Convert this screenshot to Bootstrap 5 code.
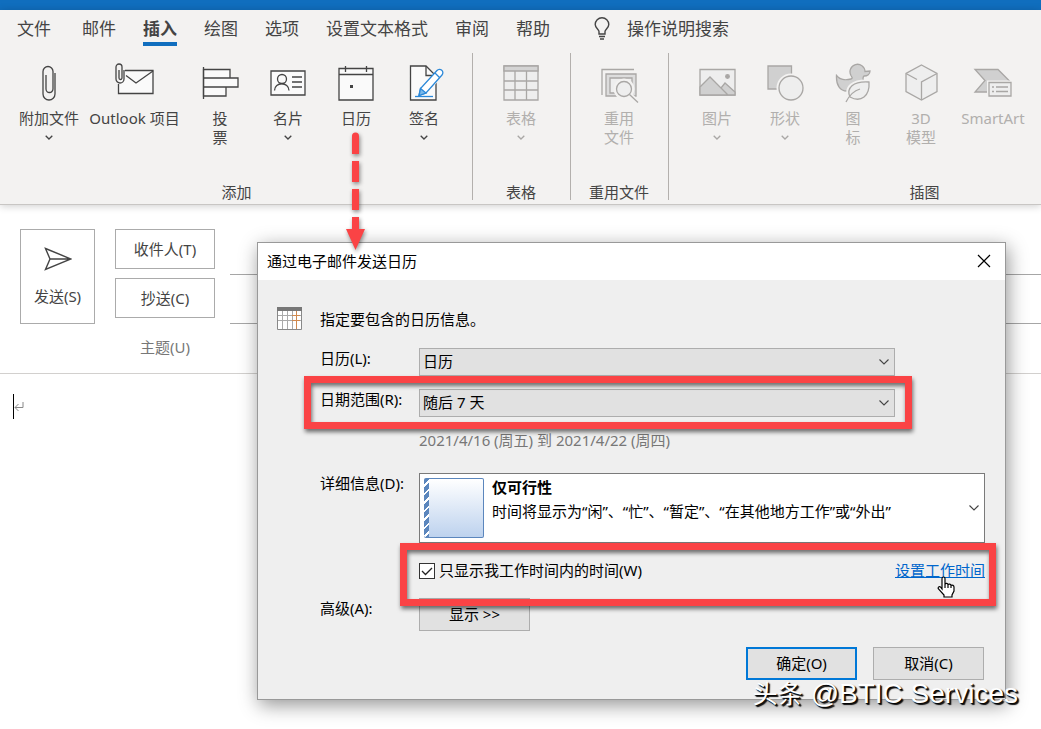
<!DOCTYPE html>
<html lang="zh-CN">
<head>
<meta charset="utf-8">
<meta name="viewport" content="width=device-width, initial-scale=1">
<title>通过电子邮件发送日历</title>
<link rel="stylesheet" href="https://cdn.jsdelivr.net/npm/bootstrap@5.3.0/dist/css/bootstrap.min.css">
<style>
  body { font: 15px/20px "Noto Sans", "Noto Sans CJK SC", sans-serif; color: #444; background: #fff; }
  button, select, input { font: inherit; }
  .titlestrip { height: 10px; background: #106ebe; }
  .ribbon { background: #f3f2f1; border-bottom: 1px solid #c8c6c4; box-shadow: 0 1px 8px rgba(0,0,0,.2); height: 195px; }
  .tabs { height: 43px; gap: 27px; padding-left: 17px; font-size: 17px; line-height: 24px; }
  .tabs a { color: #444; text-decoration: none; padding: 7px 0 1px; border-bottom: 4px solid transparent; white-space: nowrap; }
  .tabs a.active { font-weight: 700; border-color: #106ebe; }
  .tellme { margin-left: 16px; padding-top: 7px; gap: 16px; }
  .group { flex: none; height: 147px; border-right: 1px solid #b3b0ad; padding: 10px 15px 0 14px; }
  .group-add { padding: 10px 14px 0 15px; }
  .group-art { min-width: 513px; }
  .group-name { line-height: 16px; text-align: center; color: #444; }
  .tool { width: 68px; padding: 0; border: 0; border-radius: 0; line-height: 19px; color: #444; font-size: 15px; white-space: nowrap; }
  .tool:disabled { color: #b1afad; opacity: 1; border: 0; }
  .tool svg { display: block; margin: 0 auto 6px; fill: none; stroke: currentColor; stroke-width: 1.3; }
  .tool:disabled svg { color: #a9a7a5; }
  .tool svg.caret { margin: 7px auto 0; stroke-width: 1.3; }
  .tool-wide { width: 103px; }
  .tool-art { width: 76px; }
  .compose { padding: 24px 0 0 20px; border-bottom: 1px solid #d2d0ce; height: 169px; }
  .plain { background: #fff; border: 1px solid #ababab; border-radius: 0; color: #444; padding: 0; font-size: 15px; line-height: 20px; }
  .send { width: 75px; height: 95px; margin-right: 20px; gap: 15px; }
  .fields { display: grid; grid-template-columns: 100px 1fr; column-gap: 15px; grid-auto-rows: 49px; }
  .fields .plain, .fields label { height: 40px; line-height: 38px; text-align: center; }
  .fields label { color: #777; line-height: 40px; }
  .line { height: 46px; border: 0; border-bottom: 1px solid #a6a6a6; border-radius: 0; background: transparent; min-width: 0; }
  .line-last { border: 0; height: 44px; }
  .letter { padding: 20px 13px; }
  .insertion { width: 1px; height: 25px; background: #000; }
  .dialog { position: absolute; left: 257px; right: 35px; top: 242px; background: #efefef; border: 1px solid #999; box-shadow: 2px 5px 18px rgba(0,0,0,.42); color: #000; }
  .caption { height: 37px; padding: 0 14px 2px 9px; background: #fff; }
  .caption button { background: none; border: 0; padding: 0; line-height: 0; }
  .intro { padding: 27px 20px 0 19px; gap: 18px; height: 49px; line-height: 24px; }
  .form-area { padding: 19px 20px 19px 62px; }
  .field { display: grid; grid-template-columns: 99px 1fr; margin-bottom: 13px; }
  .pick { width: auto; margin-right: 90px; height: 28px; padding: 0 30px 1px 3px; border: 1px solid #adadad; border-radius: 0; color: #000; font-size: 15px; line-height: 25px;
    background: #e1e1e1 url("data:image/svg+xml,%3Csvg xmlns='http://www.w3.org/2000/svg' width='10' height='6' viewBox='0 0 10 6'%3E%3Cpath d='M.5.5 5 5 9.500.5' fill='none' stroke='%23444' stroke-width='1.1'/%3E%3C/svg%3E") no-repeat right 5px center / 10px 6px; }
  .range { color: #777; margin: 0 0 23px 99px; }
  .detail { height: 70px; background: #fff; border: 1px solid #7a7a7a; padding: 4px 5px 4px 4px; color: #000; text-align: left; white-space: nowrap; gap: 8px; }
  .thumb { width: 60px; height: 60px; flex: none; border: 1px solid #5b86bd; border-radius: 2px; border-left: 0;
    background: repeating-linear-gradient(135deg, #5b86bd 0 4px, #fff 4px 6px) left / 5px 100% no-repeat, linear-gradient(#fff, #bdd2ee); }
  .detail-text { line-height: 24px; align-self: flex-start; flex: 1; margin-top: -3px; }
  .worktime { margin: 17px 0 18px; padding-left: 99px; height: 20px; }
  .tick { width: 16px; height: 16px; margin: 3px 4px 0 0; border: 1px solid #333; border-radius: 0; appearance: none;
    background: #fff url("data:image/svg+xml,%3Csvg xmlns='http://www.w3.org/2000/svg' viewBox='0 0 14 14'%3E%3Cpath d='M2 7l3.500 3.500L12 4' fill='none' stroke='%23222' stroke-width='1.3'/%3E%3C/svg%3E") center / 14px 14px; }
  .worktime a { color: #0066cc; }
  .marked { position: relative; }
  .marked::after { content: ""; position: absolute; z-index: 2; border: 7px solid #fa4345; filter: drop-shadow(1px 3px 2px rgba(0,0,0,.55)); pointer-events: none; }
  .marked-range::after { inset: -13px 73px -12px -16px; }
  .marked-time::after { inset: -17px -11px -26px 80px; }
  .pointer { position: absolute; z-index: 3; right: 30px; top: 16px; }
  .push { width: 111px; height: 33px; padding: 0 0 1px; border: 1px solid #adadad; border-radius: 0; background: #e1e1e1; color: #000; font-size: 15px; line-height: 20px; }
  .push-main { border: 2px solid #0078d7; }
  .actions { gap: 16px; padding: 3px 1px 0 0; }
  .arrow { position: absolute; left: 342px; top: 130px; z-index: 4; filter: drop-shadow(1px 2px 2px rgba(0,0,0,.45)); pointer-events: none; }
  .credit { position: absolute; right: 23px; top: 675px; z-index: 5; font: 28px/34px "Liberation Sans", sans-serif; color: #fff; white-space: nowrap; text-shadow: 1px 1px 1px #000, 2px 2px 1px #111; }
  .credit span { font-family: "Noto Sans CJK SC", sans-serif; font-size: 25px; }
</style>
</head>
<body class="position-relative min-vh-100">
<div class="titlestrip"></div>
<header class="ribbon overflow-hidden">
  <nav class="tabs d-flex align-items-start">
    <a href="#" class="me-1">文件</a><a href="#">邮件</a><a href="#" class="active">插入</a><a href="#">绘图</a><a href="#">选项</a><a href="#">设置文本格式</a><a href="#">审阅</a><a href="#">帮助</a>
    <div class="tellme d-flex align-items-center text-nowrap">
      <svg width="18" height="24" viewBox="0 0 18 24" fill="none" stroke="#444" stroke-width="1.4"><path d="M6 17v-2.500C6 12.500 2.200 11 2.200 7.500a6.800 6.800 0 0 1 13.600 0c0 3.500-3.800 5-3.800 7V17zM6 19.500h6M7 22h4"/></svg>
      <span>操作说明搜索</span>
    </div>
  </nav>
  <div class="d-flex">
    <section class="group group-add d-flex flex-column justify-content-between">
      <div class="d-flex align-items-start">
        <button class="btn tool"><svg width="40" height="40" viewBox="0 0 40 40"><path d="M26 10v21a6 6 0 0 1-12 0V8.500a5 5 0 0 1 10 0V26a3.500 3.500 0 0 1-7 0V12"/></svg>附加文件<svg class="caret" width="8" height="5" viewBox="0 0 8 5"><path d="M.7.7 4 4 7.300.7"/></svg></button>
        <button class="btn tool tool-wide"><svg width="40" height="40" viewBox="0 0 40 40"><path fill="#fafafa" d="M10 7.500h28v23H3.500V21"/><path d="M11 12.500l10 7.500L38 8"/><path d="M9 7v9a4 4 0 0 1-8 0V4a3 3 0 0 1 6 0v11a1.500 1.500 0 0 1-3 0V7"/></svg>Outlook 项目</button>
        <button class="btn tool"><svg width="40" height="40" viewBox="0 0 40 40"><path fill="#fafafa" d="M3.500 6.500H30V15H3.500zM3.500 15H38v9H3.500zM3.500 24H26v9H3.500z"/><path d="M3.500 4v32"/></svg>投<br>票</button>
        <button class="btn tool"><svg width="40" height="40" viewBox="0 0 40 40"><path fill="#fafafa" d="M3 8h34v24H3z"/><circle cx="14" cy="16" r="4.500"/><path d="M6.500 27.500c0-9 14.500-9 14.500 0M24 14h10M24 19h10M24 24h10"/></svg>名片<svg class="caret" width="8" height="5" viewBox="0 0 8 5"><path d="M.7.7 4 4 7.300.7"/></svg></button>
        <button class="btn tool"><svg width="40" height="40" viewBox="0 0 40 40"><path fill="#fafafa" d="M3 5.500h34V37H3z"/><path d="M3 11.500h34M9.500 3v6M30.500 3v6"/><path fill="currentColor" stroke="none" d="M14 22h3v3h-3z"/></svg>日历</button>
        <button class="btn tool"><svg width="40" height="40" viewBox="0 0 40 40"><path fill="#fafafa" d="M6.500 3h15.500l10 10v24H6.500z"/><path d="M22 3v9.500h6"/><path stroke="#f3f2f1" stroke-width="8" d="M34 13L22 25"/><g stroke="#2b88d8"><path fill="#fff" d="M33 7.500a3.300 3.300 0 0 1 5 4.500L22 30l-7 2.500 1.500-7zM31 10l4.500 4.500"/><path fill="#7cb9ea" d="M16.500 25.500L22 30l-7 2.500z"/><path d="M11 33.500h18"/></g></svg>签名<svg class="caret" width="8" height="5" viewBox="0 0 8 5"><path d="M.7.7 4 4 7.300.7"/></svg></button>
      </div>
      <div class="group-name">添加</div>
    </section>
    <section class="group d-flex flex-column justify-content-between">
      <button class="btn tool" disabled><svg width="40" height="40" viewBox="0 0 40 40"><path fill="#eee" d="M3 3h34v34H3z"/><path fill="#d4d4d4" d="M3 3h34v5H3z"/><path d="M14 8v29M25.500 8v29M3 18h34M3 27h34"/></svg>表格<svg class="caret" width="8" height="5" viewBox="0 0 8 5"><path d="M.7.7 4 4 7.300.7"/></svg></button>
      <div class="group-name">表格</div>
    </section>
    <section class="group d-flex flex-column justify-content-between">
      <button class="btn tool" disabled><svg width="40" height="40" viewBox="0 0 40 40"><path d="M3 32V6.500h32"/><path fill="#ddd" d="M7 11h30v22H7z"/><path fill="#eee" d="M11 15h22v15H11z"/><path stroke="#f3f2f1" stroke-width="5" d="M31 32l8 8"/><circle cx="25" cy="26" r="8" fill="#eee" stroke="#f3f2f1" stroke-width="5"/><circle cx="25" cy="26" r="7.500" fill="#eee"/><path d="M30.500 31.500L39 39.500"/></svg>重用<br>文件</button>
      <div class="group-name">重用文件</div>
    </section>
    <section class="group group-art d-flex flex-column justify-content-between">
      <div class="d-flex align-items-start">
        <button class="btn tool" disabled><svg width="40" height="40" viewBox="0 0 40 40"><path fill="#eee" d="M3 6.500h35V32H3z"/><path fill="#d0d0d0" d="M3 24l10-10 18 18H3zM24 25l4-5 10 9v3h-7z"/><circle cx="30.500" cy="13.500" r="1.800" fill="currentColor"/></svg>图片<svg class="caret" width="8" height="5" viewBox="0 0 8 5"><path d="M.7.7 4 4 7.300.7"/></svg></button>
        <button class="btn tool" disabled><svg width="40" height="40" viewBox="0 0 40 40"><path fill="#d0d0d0" d="M3 3h23.500v23H3z"/><circle cx="26" cy="25" r="12.500" fill="#eee" stroke="#f3f2f1" stroke-width="4"/><circle cx="26" cy="25" r="12" fill="#eee"/></svg>形状<svg class="caret" width="8" height="5" viewBox="0 0 8 5"><path d="M.7.7 4 4 7.300.7"/></svg></button>
        <button class="btn tool" disabled><svg width="40" height="40" viewBox="0 0 40 40"><path fill="#d0d0d0" d="M18 12.500a7.500 7.500 0 1 1 14-4l5-.5c0 3-2.500 5-6 5-2 2-1 4 0 6l-1 9H14C7 28 3 22 3.500 12.500c3 4 9 5 14.500 3.500 2-.5 1-2 0-3.500z"/><path stroke="#f3f2f1" stroke-width="5" fill="#eee" d="M17 34c-4-9 3-16 19-15 1 14-8 21-19 15z"/><path fill="#eee" d="M17 34c-4-9 3-16 19-15 1 14-8 21-19 15z"/><path d="M13 39c3-6 7-11 14-13"/></svg>图<br>标</button>
        <button class="btn tool" disabled><svg width="40" height="40" viewBox="0 0 40 40"><path fill="#eee" d="M20.500 2L36 10.500v18L20.500 37 5 28.500v-18z"/><path d="M5 10.500l11 6M36 10.500l-15.500 8.500v18"/></svg>3D<br>模型</button>
        <button class="btn tool tool-art" disabled><svg width="40" height="40" viewBox="0 0 40 40"><path fill="#d0d0d0" d="M2 6.500h23L36.500 18v11H2l10-11.500z"/><path fill="#eee" stroke="#f3f2f1" stroke-width="4" d="M16 19.500h22V33H16z"/><path fill="#eee" d="M16 19.500h22V33H16z"/><path stroke-dasharray="2 2 20" d="M19 24h16M19 28.500h16"/></svg>SmartArt</button>
      </div>
      <div class="group-name">插图</div>
    </section>
  </div>
</header>

<section class="compose d-flex align-items-start">
  <button class="btn plain send d-flex flex-column align-items-center justify-content-center"><svg width="28" height="24" viewBox="0 0 28 24" fill="none" stroke="#444" stroke-width="1.4"><path d="M1.500 1.500L27 12 1.500 22.500 6 12zM6 12h20"/></svg><span>发送(S)</span></button>
  <div class="fields flex-grow-1">
    <button class="btn plain">收件人(T)</button><input class="line" aria-label="收件人">
    <button class="btn plain">抄送(C)</button><input class="line" aria-label="抄送">
    <label for="subject">主题(U)</label><input class="line line-last" id="subject">
  </div>
</section>
<main class="letter d-flex align-items-center">
  <span class="insertion"></span>
  <svg width="10" height="10" viewBox="0 0 10 10" fill="none" stroke="#888"><path d="M9 0v5.500H1M4.500 2L1 5.500 4.500 9"/></svg>
</main>

<div class="dialog" role="dialog" aria-labelledby="dlg-title">
  <div class="caption d-flex align-items-center justify-content-between">
    <span id="dlg-title">通过电子邮件发送日历</span>
    <button aria-label="关闭"><svg width="14" height="14" viewBox="0 0 14 14" stroke="#000" stroke-width="1.2"><path d="M1 1l12 12M13 1L1 13"/></svg></button>
  </div>
  <div class="intro d-flex">
    <svg width="25" height="23" viewBox="0 0 25 23"><path fill="#fff" stroke="#888" d="M.5.5h24v22H.5z"/><path fill="#777" d="M0 0h25v4H0z"/><path stroke="#aaa" fill="none" d="M5.500 4v18M10.500 4v18M15.500 4v18M1 8.500h23M1 13.500h23"/><path stroke="#d08a50" fill="none" d="M19.500 4v18M15 8.500h8M15 13.500h8"/></svg>
    <span>指定要包含的日历信息。</span>
  </div>
  <form class="form-area">
    <div class="field"><label for="cal">日历(L):</label><select class="form-select pick" id="cal"><option>日历</option></select></div>
    <div class="field marked marked-range"><label for="span">日期范围(R):</label><select class="form-select pick" id="span"><option>随后 7 天</option></select></div>
    <div class="range">2021/4/16 (周五) 到 2021/4/22 (周四)</div>
    <div class="field mb-0"><label for="detail">详细信息(D):</label>
      <button type="button" class="detail d-flex align-items-center" id="detail">
        <span class="thumb"></span>
        <span class="detail-text"><b>仅可行性</b><br>时间将显示为“闲”、“忙”、“暂定”、“在其他地方工作”或“外出”</span>
        <svg width="10" height="6" viewBox="0 0 10 6" fill="none" stroke="#444" stroke-width="1.1"><path d="M.5.5L5 5 9.500.5"/></svg>
      </button>
    </div>
    <div class="worktime marked marked-time d-flex align-items-start">
      <input type="checkbox" class="tick" id="hours" checked><label for="hours">只显示我工作时间内的时间(W)</label>
      <a href="#" class="ms-auto">设置工作时间</a>
      <svg class="pointer" width="18" height="22" viewBox="0 0 18 22" fill="#fff" stroke="#000" stroke-width="1.2"><path d="M5 13V2.500a1.500 1.500 0 0 1 3 0V8c1-1 2.500-.8 3 .5 1-.8 2.500-.5 3 .8 1.500-.6 3 .2 3 1.700V15l-2 4v2H7v-2L1.500 13c-1-1.500.5-3 2-2zM8 8v4M11 8.500V12M14 9.500V12"/></svg>
    </div>
    <div class="field"><label for="more">高级(A):</label><button type="button" id="more" class="btn push">显示 &gt;&gt;</button></div>
    <div class="actions d-flex justify-content-end"><button type="button" class="btn push push-main">确定(O)</button><button type="button" class="btn push">取消(C)</button></div>
  </form>
</div>

<svg class="arrow" width="28" height="122" viewBox="0 0 28 122" fill="#fa4345"><path d="M10 24V6a3.500 3.500 0 0 1 7 0v18zM10 31h7v21h-7zM10 59h7v21h-7zM10 87h7v12h6l-9.500 21L4 99h6z"/></svg>
<div class="credit"><span>头条</span> @BTIC Services</div>
<script src="https://cdn.jsdelivr.net/npm/bootstrap@5.3.0/dist/js/bootstrap.bundle.min.js"></script>
</body>
</html>
